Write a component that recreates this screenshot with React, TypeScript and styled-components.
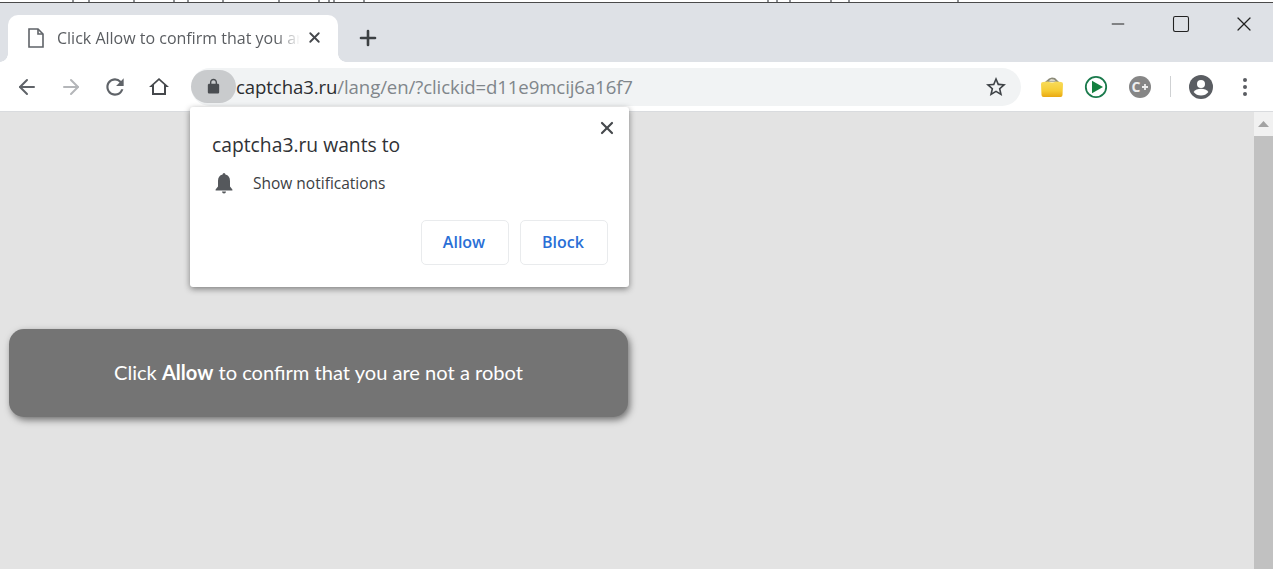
import React from 'react'
import styled, { createGlobalStyle } from 'styled-components'
import { ArrowLeft, ArrowRight, X, Plus, Minus, Square } from 'lucide-react'

const GlobalStyle = createGlobalStyle`
	html, body {
		margin: 0;
		padding: 0;
		height: 100%;
		overflow: hidden;
		background: #e3e3e3;
		font-family: 'Open Sans', 'Noto Sans', sans-serif;
	}
	#root {
		height: 100%;
	}
`

const Window = styled.div`
	position: relative;
	width: 1273px;
	height: 569px;
	display: flex;
	flex-direction: column;
	overflow: hidden;
`

const TopEdge = styled.div`
	height: 3px;
	box-sizing: border-box;
	background: #fff;
	border-bottom: 1px solid #4a4a4a;
	svg {
		display: block;
	}
`

const TabStrip = styled.div`
	height: 59px;
	background: #dee1e6;
	display: flex;
	align-items: flex-end;
	padding-left: 8px;
`

const Tab = styled.div`
	position: relative;
	width: 330px;
	height: 47px;
	box-sizing: border-box;
	background: #fff;
	border-radius: 10px 10px 0 0;
	display: flex;
	align-items: center;
	padding: 0 15px 2px 19px;
	color: #5f6368;
	&::before,
	&::after {
		content: '';
		position: absolute;
		bottom: 0;
		width: 8px;
		height: 8px;
	}
	&::before {
		left: -8px;
		background: radial-gradient(circle at 0 0, #dee1e6 7.5px, #fff 8px);
	}
	&::after {
		right: -8px;
		background: radial-gradient(circle at 100% 0, #dee1e6 7.5px, #fff 8px);
	}
`

const TabTitle = styled.span`
	margin-left: 12px;
	width: 243px;
	font-size: 16px;
	white-space: nowrap;
	overflow: hidden;
	color: #5a5d61;
	-webkit-mask-image: linear-gradient(to right, #000 90%, transparent 100%);
	mask-image: linear-gradient(to right, #000 90%, transparent 100%);
`

const TabClose = styled.span`
	margin-left: 6px;
	display: flex;
	color: #45484c;
`

const NewTab = styled.span`
	margin: 0 0 12px 18px;
	display: flex;
	color: #3c4043;
`

const WindowControls = styled.div`
	margin-left: auto;
	margin-right: -2px;
	align-self: flex-start;
	display: flex;
	color: #222;
`

const WindowButton = styled.span`
	width: 63px;
	height: 42px;
	display: flex;
	align-items: center;
	justify-content: center;
`

const Toolbar = styled.div`
	height: 50px;
	box-sizing: border-box;
	background: #fff;
	border-bottom: 1px solid #d9dbde;
	display: flex;
	align-items: center;
	padding-left: 15px;
	color: #5f6368;
`

const NavButton = styled.span<{ $faded?: boolean }>`
	width: 44px;
	display: flex;
	color: ${(p) => (p.$faded ? '#b4b6b9' : '#5f6368')};
`

const Omnibox = styled.div`
	width: 830px;
	height: 38px;
	background: #f1f3f4;
	border-radius: 19px;
	display: flex;
	align-items: center;
	font-size: 18.6px;
	letter-spacing: -0.1px;
	color: #80868b;
`

const LockChip = styled.span`
	width: 45px;
	height: 33px;
	border-radius: 17px;
	background: #c9cbcd;
	display: flex;
	align-items: center;
	justify-content: center;
	color: #4a4d51;
`

const Host = styled.span`
	color: #2b2d30;
`

const OmniStar = styled.span`
	margin-left: auto;
	margin-right: 13px;
	display: flex;
	color: #3f4347;
`

const Extensions = styled.div`
	margin-left: 8px;
	display: flex;
	align-items: center;
`

const ExtensionSlot = styled.span<{ $wide?: boolean }>`
	width: ${(p) => (p.$wide ? '45px' : '44px')};
	display: flex;
	justify-content: center;
`

const Divider = styled.span`
	width: 1px;
	height: 21px;
	background: #cfd1d3;
	margin: 0 8px 0 8px;
`

const Page = styled.div`
	flex: 1;
	display: flex;
	background: #e3e3e3;
	min-height: 0;
`

const Content = styled.div`
	flex: 1;
	padding: 217px 0 0 9px;
`

const Banner = styled.div`
	width: 619px;
	height: 88px;
	box-sizing: border-box;
	padding-bottom: 2px;
	background: #747474;
	border-radius: 15px;
	box-shadow: 2px 3px 7px rgba(0, 0, 0, 0.5);
	display: flex;
	align-items: center;
	justify-content: center;
	color: #fff;
	font-family: 'Lato', 'Open Sans', sans-serif;
	font-size: 20.1px;
	b {
		font-weight: 700;
	}
`

const Scrollbar = styled.div`
	width: 19px;
	background: #f1f1f1;
	display: flex;
	flex-direction: column;
	align-items: center;
`

const ScrollArrow = styled.span`
	height: 24px;
	display: flex;
	align-items: center;
	justify-content: center;
`

const ScrollThumb = styled.div`
	flex: 1;
	width: 100%;
	background: #c1c1c1;
`

const Popup = styled.div`
	position: absolute;
	left: 190px;
	top: 107px;
	width: 439px;
	height: 180px;
	box-sizing: border-box;
	background: #fff;
	border-radius: 3px;
	box-shadow: 0 2px 6px rgba(0, 0, 0, 0.45);
	padding: 24px 21px 22px 22px;
	display: flex;
	flex-direction: column;
`

const PopupClose = styled.span`
	position: absolute;
	top: 11px;
	right: 12px;
	display: flex;
	color: #46494d;
`

const PopupTitle = styled.div`
	font-size: 19.3px;
	line-height: 27px;
	color: #303236;
`

const Permission = styled.div`
	margin-top: 14px;
	display: flex;
	align-items: center;
	font-size: 15.5px;
	line-height: 22px;
	color: #3c4043;
`

const PermissionIcon = styled.span`
	width: 41px;
	display: flex;
	padding-left: 2px;
	box-sizing: border-box;
	color: #55585c;
`

const PopupActions = styled.div`
	margin-top: auto;
	display: flex;
	justify-content: flex-end;
	gap: 11px;
`

const PopupButton = styled.button`
	width: 88px;
	height: 45px;
	background: #fff;
	border: 1px solid #e9ebed;
	border-radius: 5px;
	color: #2a6fd6;
	font-family: inherit;
	font-weight: 600;
	font-size: 16px;
	padding: 0 2px 2px 0;
`

const edgeTicks = [72, 88, 133, 173, 187, 222, 278, 318, 328, 333, 363, 767, 776, 789, 830, 848, 957]

const EdgeMarks = () => (
	<svg width="1273" height="2">
		{edgeTicks.map((x) => (
			<rect key={x} x={x} y="0" width="2" height="2" fill="#8d8f92" />
		))}
	</svg>
)

const ReloadIcon = () => (
	<svg width="26" height="26" viewBox="0 0 24 24" fill="currentColor" style={{ marginLeft: -1 }}>
		<path d="M17.65 6.35A7.958 7.958 0 0 0 12 4c-4.42 0-7.99 3.58-7.99 8s3.57 8 7.99 8c3.73 0 6.84-2.55 7.73-6h-2.08A5.99 5.99 0 0 1 12 18c-3.31 0-6-2.69-6-6s2.69-6 6-6c1.66 0 3.14.69 4.22 1.78L13 11h7V4l-2.35 2.35z" />
	</svg>
)

const HomeIcon = () => (
	<svg width="24" height="24" viewBox="0 0 24 24" fill="#45484c" fillRule="evenodd">
		<path d="M12 3L2 12h3v8h14v-8h3L12 3zm5 15H7v-8.2l5-4.5 5 4.5V18z" />
	</svg>
)

const LockIcon = () => (
	<svg width="17" height="17" viewBox="0 0 24 24" fill="currentColor">
		<path d="M18 8h-1V6c0-2.76-2.24-5-5-5S7 3.24 7 6v2H6c-1.1 0-2 .9-2 2v10c0 1.1.9 2 2 2h12c1.1 0 2-.9 2-2V10c0-1.1-.9-2-2-2zM9 6c0-1.66 1.34-3 3-3s3 1.34 3 3v2H9V6z" />
	</svg>
)

const StarIcon = () => (
	<svg width="24" height="24" viewBox="0 0 24 24" fill="currentColor">
		<path d="M22 9.24l-7.19-.62L12 2 9.19 8.63 2 9.24l5.46 4.73L5.82 21 12 17.27 18.18 21l-1.63-7.03L22 9.24zM12 15.4l-3.76 2.27 1-4.28-3.32-2.88 4.38-.38L12 6.1l1.71 4.04 4.38.38-3.32 2.88 1 4.28L12 15.4z" />
	</svg>
)

const FolderIcon = () => (
	<svg width="24" height="24" viewBox="0 0 24 24">
		<defs>
			<linearGradient id="folderFill" x1="0" y1="0" x2="0" y2="1">
				<stop offset="0" stopColor="#f8dc5c" />
				<stop offset="0.6" stopColor="#f6cc34" />
				<stop offset="1" stopColor="#e9a812" />
			</linearGradient>
		</defs>
		<path d="M5 7 L9 3.5 L12 2.5 L15 3 L19 7 Z" fill="#8b8a78" />
		<path d="M8.5 6.5 L11 4 L14 4.5 L16 6.5 Z" fill="#dcdacb" />
		<path d="M1 9 Q1 7 3 7 L8 6.5 Q12 8.5 16 6.5 L21 7 Q23 7 23 9 L22.5 20 Q22.5 22 20.5 22 L3.5 22 Q1.5 22 1.5 20 Z" fill="url(#folderFill)" />
	</svg>
)

const PlayIcon = () => (
	<svg width="24" height="24" viewBox="0 0 24 24">
		<circle cx="12" cy="12" r="10.2" fill="#fff" stroke="#1a7a4c" strokeWidth="1.8" />
		<path d="M8 5.8 L19 12 L8 18.2 Z" fill="#14803f" />
	</svg>
)

const GrammarIcon = () => (
	<svg width="24" height="24" viewBox="0 0 24 24">
		<circle cx="12" cy="12" r="11" fill="#868686" />
		<text x="3.5" y="17" fontSize="14" fontWeight="700" fontFamily="'Open Sans', sans-serif" fill="#eee">C</text>
		<path d="M14 12 H20 M17 9 V15" stroke="#eee" strokeWidth="1.8" />
	</svg>
)

const AccountIcon = () => (
	<svg width="24" height="24" viewBox="0 0 24 24">
		<circle cx="12" cy="12" r="12" fill="#5a5d62" />
		<circle cx="12" cy="9" r="4" fill="#fff" />
		<path d="M4.6 17 Q7 13.8 12 13.8 Q17 13.8 19.4 17 Q16.5 20.5 12 20.5 Q7.5 20.5 4.6 17 Z" fill="#fff" />
	</svg>
)

const DotsIcon = () => (
	<svg width="6" height="20" viewBox="0 0 6 20">
		<circle cx="3" cy="3" r="2" fill="#5a5d62" />
		<circle cx="3" cy="10" r="2" fill="#5a5d62" />
		<circle cx="3" cy="17" r="2" fill="#5a5d62" />
	</svg>
)

const BellIcon = () => (
	<svg width="20" height="22" viewBox="0 0 20 22" fill="currentColor">
		<path d="M10 1 Q11.4 1 11.4 2.6 Q16 3.8 16 9 V14.5 L18.4 17.4 V18.4 H1.6 V17.4 L4 14.5 V9 Q4 3.8 8.6 2.6 Q8.6 1 10 1 Z" />
		<path d="M8 19.4 H12 Q12 21.5 10 21.5 Q8 21.5 8 19.4 Z" />
	</svg>
)

const PageIcon = () => (
	<svg width="18" height="20" viewBox="0 0 18 20" fill="none" stroke="#5f6368" strokeWidth="1.6">
		<path d="M2 1 H11 L16 6 V19 H2 Z" />
		<path d="M11 1 V6 H16" />
	</svg>
)

const UpArrow = () => (
	<svg width="11" height="6" viewBox="0 0 11 6">
		<path d="M5.5 0 L11 6 H0 Z" fill="#a3a3a3" />
	</svg>
)

export default function App() {
	return (
		<Window>
			<GlobalStyle />
			<TopEdge>
				<EdgeMarks />
			</TopEdge>
			<TabStrip>
				<Tab>
					<PageIcon />
					<TabTitle>Click Allow to confirm that you are not a robot</TabTitle>
					<TabClose>
						<X size={17} strokeWidth={2.6} />
					</TabClose>
				</Tab>
				<NewTab>
					<Plus size={24} strokeWidth={2.6} />
				</NewTab>
				<WindowControls>
					<WindowButton>
						<Minus size={20} strokeWidth={1.2} />
					</WindowButton>
					<WindowButton>
						<Square size={20} strokeWidth={1.3} />
					</WindowButton>
					<WindowButton>
						<X size={24} strokeWidth={1.2} />
					</WindowButton>
				</WindowControls>
			</TabStrip>
			<Toolbar>
				<NavButton>
					<ArrowLeft size={24} strokeWidth={2} />
				</NavButton>
				<NavButton $faded>
					<ArrowRight size={24} strokeWidth={2} />
				</NavButton>
				<NavButton>
					<ReloadIcon />
				</NavButton>
				<NavButton>
					<HomeIcon />
				</NavButton>
				<Omnibox>
					<LockChip>
						<LockIcon />
					</LockChip>
					<Host>captcha3.ru</Host>/lang/en/?clickid=d11e9mcij6a16f7
					<OmniStar>
						<StarIcon />
					</OmniStar>
				</Omnibox>
				<Extensions>
					<ExtensionSlot $wide>
						<FolderIcon />
					</ExtensionSlot>
					<ExtensionSlot>
						<PlayIcon />
					</ExtensionSlot>
					<ExtensionSlot>
						<GrammarIcon />
					</ExtensionSlot>
					<Divider />
					<ExtensionSlot>
						<AccountIcon />
					</ExtensionSlot>
					<ExtensionSlot>
						<DotsIcon />
					</ExtensionSlot>
				</Extensions>
			</Toolbar>
			<Page>
				<Content>
					<Banner>
						<span>
							Click <b>Allow</b> to confirm that you are not a robot
						</span>
					</Banner>
				</Content>
				<Scrollbar>
					<ScrollArrow>
						<UpArrow />
					</ScrollArrow>
					<ScrollThumb />
				</Scrollbar>
			</Page>
			<Popup>
				<PopupClose>
					<X size={20} strokeWidth={2.6} />
				</PopupClose>
				<PopupTitle>captcha3.ru wants to</PopupTitle>
				<Permission>
					<PermissionIcon>
						<BellIcon />
					</PermissionIcon>
					Show notifications
				</Permission>
				<PopupActions>
					<PopupButton>Allow</PopupButton>
					<PopupButton>Block</PopupButton>
				</PopupActions>
			</Popup>
		</Window>
	)
}
